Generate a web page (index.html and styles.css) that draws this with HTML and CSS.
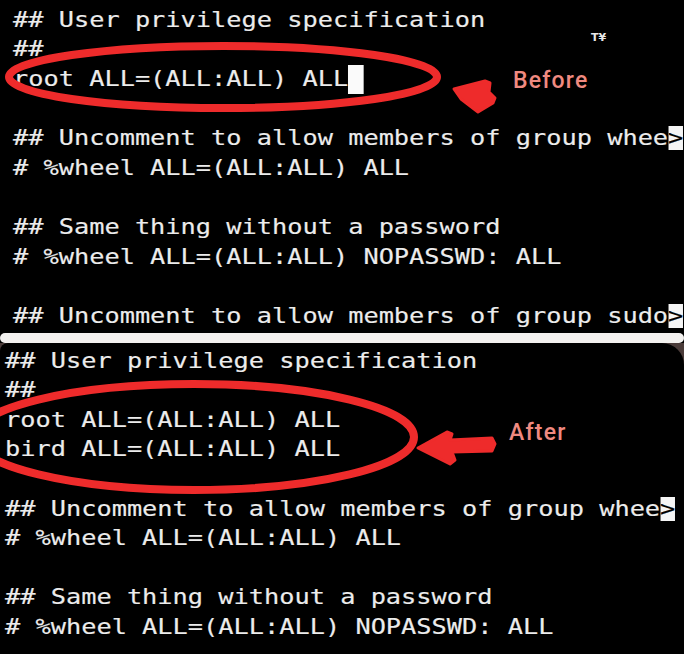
FILE: index.html
```html
<!DOCTYPE html>
<html>
<head>
<meta charset="utf-8">
<link rel="stylesheet" href="styles.css">
</head>
<body>
<div class="shot top">
<pre class="term">## User privilege specification
##
root ALL=(ALL:ALL) ALL<span class="cursor"></span>

## Uncomment to allow members of group whee<span class="rev">&gt;</span>
# %wheel ALL=(ALL:ALL) ALL

## Same thing without a password
# %wheel ALL=(ALL:ALL) NOPASSWD: ALL

## Uncomment to allow members of group sudo<span class="rev">&gt;</span></pre>
<svg class="marks" width="684" height="333" viewBox="0 0 684 333">
<ellipse cx="223" cy="77" rx="214" ry="31" fill="none" stroke="#ee2b2b" stroke-width="8"/>
<polygon points="454,89 485,81 490,83 489,92 495,98 493,103 478,112 461,99" fill="#ee2b2b" stroke="#ee2b2b" stroke-width="3" stroke-linejoin="round"/>
</svg>
<span class="label before">Before</span>
<span class="wm">T¥</span>
</div>
<div class="divider"></div>
<div class="bottom-wrap">
<div class="shot bottom">
<pre class="term">## User privilege specification
##
root ALL=(ALL:ALL) ALL
bird ALL=(ALL:ALL) ALL

## Uncomment to allow members of group whee<span class="rev">&gt;</span>
# %wheel ALL=(ALL:ALL) ALL

## Same thing without a password
# %wheel ALL=(ALL:ALL) NOPASSWD: ALL</pre>
<svg class="marks" width="684" height="311" viewBox="0 0 684 311">
<ellipse cx="194" cy="94" rx="220" ry="53" fill="none" stroke="#ee2b2b" stroke-width="8"/>
<polygon points="418,105 447,89 452,91 450,97 492,95 495,101 492,108 452,109 455,117 450,121" fill="#ee2b2b" stroke="#ee2b2b" stroke-width="3" stroke-linejoin="round"/>
</svg>
<span class="label after">After</span>
</div>
</div>
</body>
</html>
```
FILE: styles.css
```css
html, body {
  margin: 0;
  padding: 0;
  background: #000;
  width: 684px;
  height: 654px;
  overflow: hidden;
}

.shot {
  position: relative;
  background: #000;
  overflow: hidden;
}

.top {
  height: 333px;
  padding: 5.8px 0 0 13px;
  box-sizing: border-box;
}

.bottom-wrap {
  background: #4a3b39;
  height: 311px;
}

.bottom {
  height: 311px;
  padding: 3.6px 0 0 5px;
  box-sizing: border-box;
  border-radius: 8px 22px 0 0;
}

.divider {
  height: 10px;
  background: #f3f1ef;
  border-radius: 5px;
}

.term {
  margin: 0;
  font-family: "DejaVu Sans Mono", monospace;
  font-size: 21px;
  line-height: 29.6px;
  color: #ececec;
  -webkit-text-stroke: 0.15px #ececec;
  white-space: pre;
  transform: scaleX(1.205);
  transform-origin: 0 0;
}

.cursor {
  display: inline-block;
  width: 1ch;
  height: 29px;
  background: #fafafa;
  vertical-align: top;
}

.rev {
  background: #f5f5f5;
  color: #000;
  -webkit-text-stroke: 0.15px #000;
}

.marks {
  position: absolute;
  left: 0;
  top: 0;
}

.label {
  position: absolute;
  font-family: Roboto, "Liberation Sans", sans-serif;
  font-weight: 500;
  font-size: 23px;
  line-height: 23px;
  letter-spacing: 1.2px;
  color: #f08a80;
}

.before {
  left: 513px;
  top: 69px;
}

.after {
  left: 509px;
  top: 78px;
}

.wm {
  position: absolute;
  left: 591px;
  top: 31px;
  font-family: "DejaVu Sans", sans-serif;
  font-weight: bold;
  font-size: 11px;
  color: #e8e8e8;
}
```
